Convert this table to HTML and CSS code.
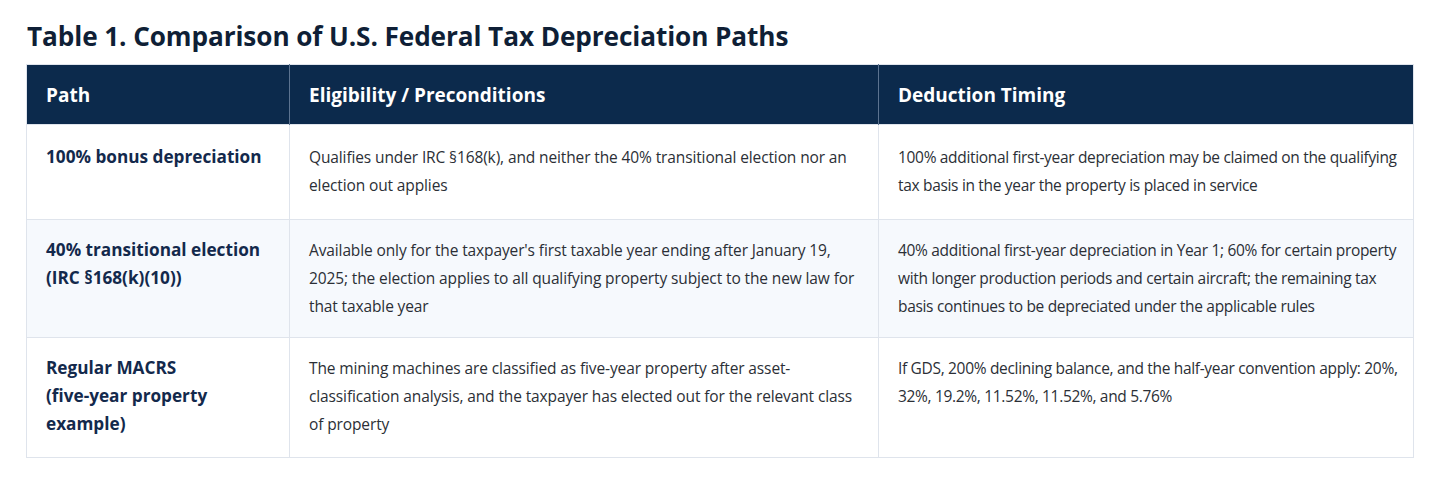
FILE: index.html
```html
<!DOCTYPE html>
<html lang="en">
<head>
<meta charset="utf-8">
<title>Table 1</title>
<link rel="stylesheet" href="styles.css">
</head>
<body>
<main class="page">
  <h1 class="title">Table 1. Comparison of U.S. Federal Tax Depreciation Paths</h1>
  <table class="tbl">
    <colgroup>
      <col class="c1"><col class="c2"><col class="c3">
    </colgroup>
    <thead>
      <tr>
        <th>Path</th>
        <th>Eligibility / Preconditions</th>
        <th>Deduction Timing</th>
      </tr>
    </thead>
    <tbody>
      <tr class="r1">
        <td class="path">100% bonus depreciation</td>
        <td class="elig">Qualifies under IRC §168(k), and neither the 40% transitional election nor an election out applies</td>
        <td>100% additional first-year depreciation may be claimed on the qualifying tax basis in the year the property is placed in service</td>
      </tr>
      <tr class="r2 alt">
        <td class="path">40% transitional election (IRC §168(k)(10))</td>
        <td class="elig">Available only for the taxpayer's first taxable year ending after January 19, 2025; the election applies to all qualifying property subject to the new law for that taxable year</td>
        <td>40% additional first-year depreciation in Year 1; 60% for certain property with longer production periods and certain aircraft; the remaining tax basis continues to be depreciated under the applicable rules</td>
      </tr>
      <tr class="r3">
        <td class="path">Regular MACRS<br>(five-year property example)</td>
        <td class="elig">The mining machines are classified as five-year property after asset-classification analysis, and the taxpayer has elected out for the relevant class of property</td>
        <td>If GDS, 200% declining balance, and the half-year convention apply: 20%, 32%, 19.2%, 11.52%, 11.52%, and 5.76%</td>
      </tr>
    </tbody>
  </table>
</main>
</body>
</html>
```

FILE: styles.css
```css
html, body {
  margin: 0;
  padding: 0;
  background: #ffffff;
}
body {
  font-family: "Open Sans", "Noto Sans", "Liberation Sans", sans-serif;
  color: #2b2f36;
}
.page {
  padding: 18px 27px 20px 26px;
}
.title {
  margin: 0 0 10px 1px;
  font-size: 26.2px;
  line-height: 36px;
  font-weight: 700;
  color: #0f1f36;
  letter-spacing: -0.1px;
}
.tbl {
  width: 1387px;
  border-collapse: collapse;
  table-layout: fixed;
  border: 1px solid #dfe4ec;
}
.c1 { width: 263px; }
.c2 { width: 589px; }
.c3 { width: 535px; }
.tbl th {
  background: #0c2a4c;
  color: #ffffff;
  text-align: left;
  font-size: 19px;
  font-weight: 700;
  height: 59px;
  padding: 0 19px;
  border-left: 1px solid #5c7390;
}
.tbl th:first-child { border-left: none; }
.tbl td {
  vertical-align: top;
  font-size: 15.5px;
  line-height: 28px;
  padding: 16px 13px 17px 19px;
  border-top: 1px solid #dfe4ec;
  border-left: 1px solid #dfe4ec;
  letter-spacing: -0.32px;
}
.tbl td.elig {
  padding-right: 16px;
  letter-spacing: -0.12px;
}
.tbl td.path {
  font-weight: 700;
  font-size: 17.2px;
  color: #13294c;
  letter-spacing: 0;
}
.r1 td { padding-top: 18px; padding-bottom: 20px; }
.r3 td { padding-bottom: 19px; }
.alt td { background: #f6f9fd; }
```
